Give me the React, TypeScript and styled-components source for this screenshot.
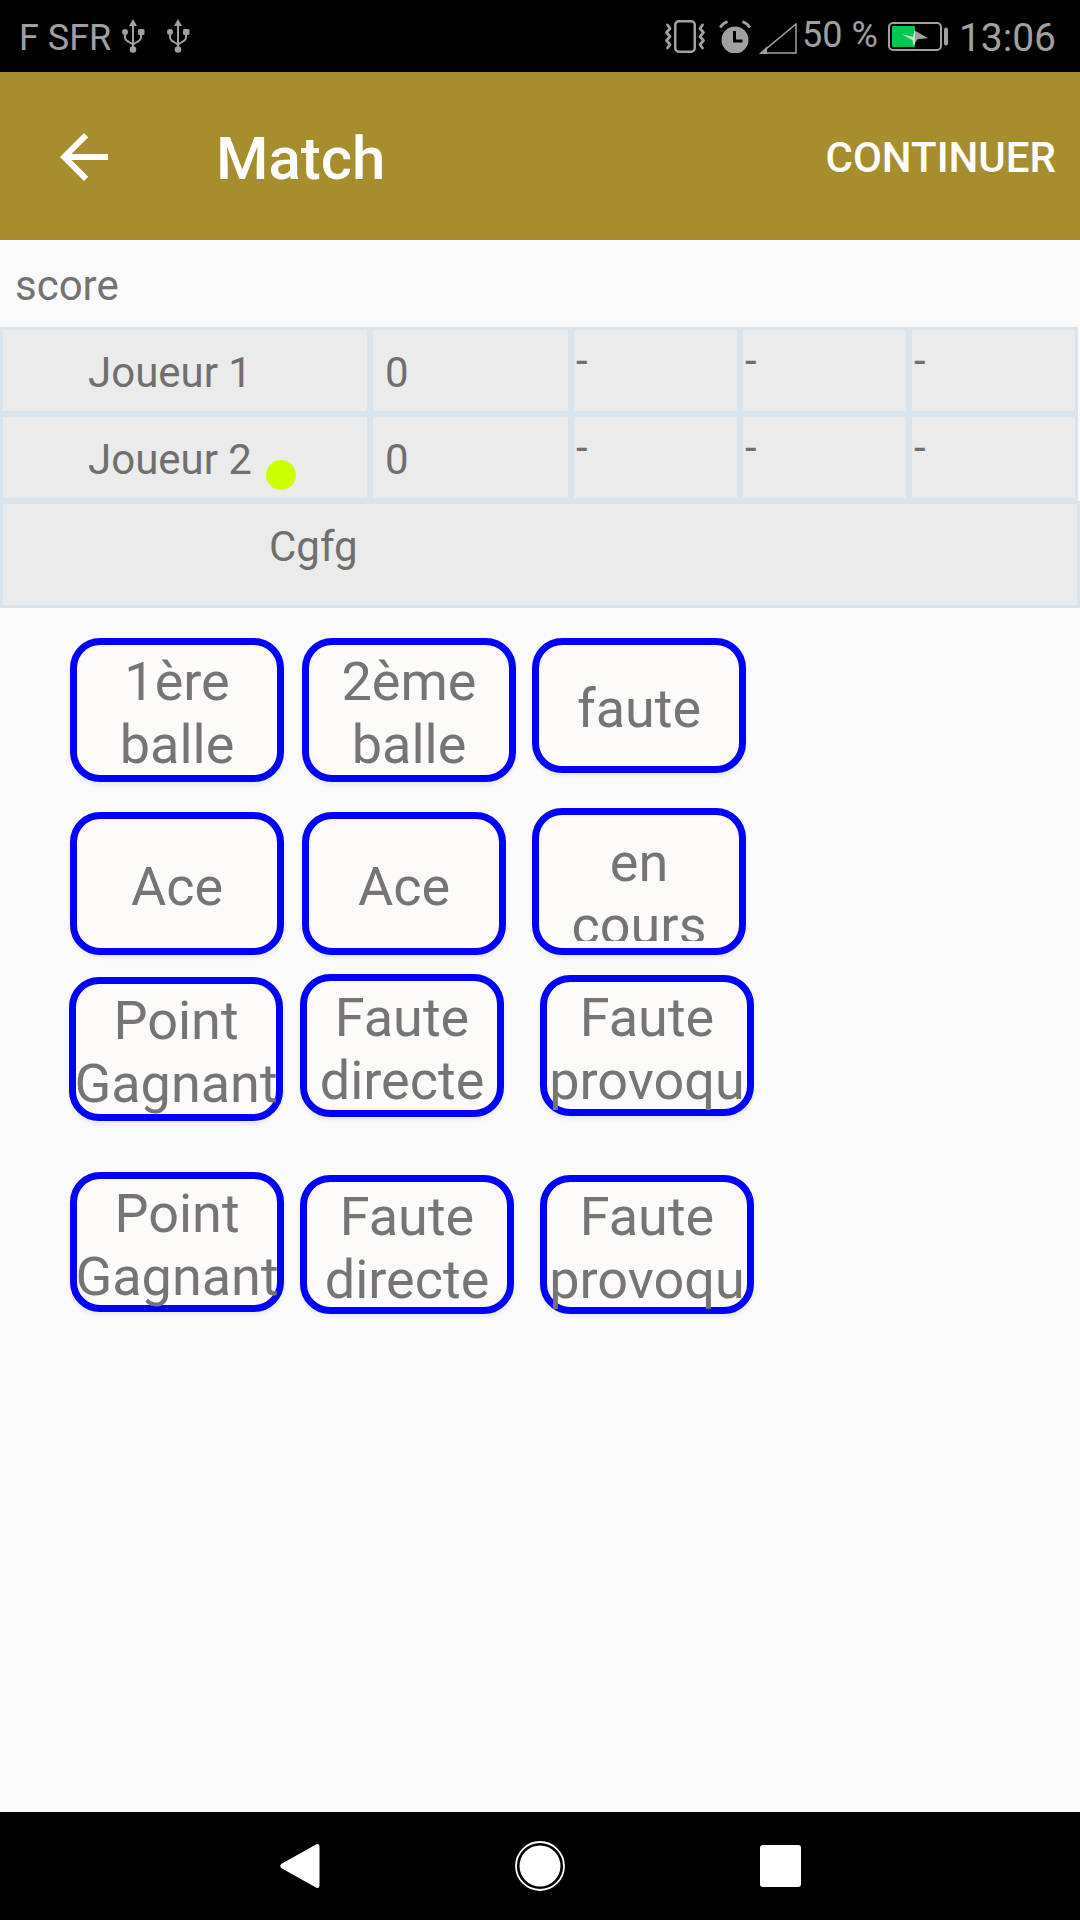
import React from "react";
import styled, { createGlobalStyle } from "styled-components";

const Global = createGlobalStyle`
  html, body { margin: 0; padding: 0; background: #fafafa; }
  * { box-sizing: border-box; }
`;

const Screen = styled.div`
  width: 1080px;
  height: 1920px;
  display: flex;
  flex-direction: column;
  overflow: hidden;
  background: #fafafa;
  font-family: Roboto, "Liberation Sans", sans-serif;
`;

const StatusBar = styled.div`
  height: 72px;
  flex: none;
  background: #000;
  color: #a0a0a0;
  display: flex;
  align-items: center;
  padding: 0 24px 0 19px;
`;

const StatusText = styled.span<{ $size: number; $ml?: number; $mt?: number }>`
  font-size: ${(p) => p.$size}px;
  line-height: 1;
  margin-left: ${(p) => p.$ml ?? 0}px;
  margin-top: ${(p) => p.$mt ?? 0}px;
  white-space: nowrap;
`;

const StatusIcon = styled.svg<{ $ml?: number; $mt?: number }>`
  display: block;
  flex: none;
  margin-left: ${(p) => p.$ml ?? 0}px;
  margin-top: ${(p) => p.$mt ?? 0}px;
`;

const Spacer = styled.div`
  flex: 1;
`;

const AppBar = styled.div`
  height: 168px;
  flex: none;
  background: #a68d2d;
  color: #fff;
  display: flex;
  align-items: center;
  padding: 0 24px 0 48px;
`;

const BackIcon = styled.svg`
  display: block;
  flex: none;
  margin-top: 2px;
`;

const Title = styled.div`
  font-size: 60px;
  font-weight: 500;
  margin: 5px 0 0 96px;
  line-height: 70px;
`;

const Action = styled.div`
  font-size: 42px;
  font-weight: 500;
  line-height: 49px;
  margin-top: 3px;
`;

const Content = styled.div`
  flex: 1;
  display: flex;
  flex-direction: column;
`;

const ScoreLabel = styled.div`
  height: 87px;
  flex: none;
  padding: 21px 0 0 15px;
  font-size: 42px;
  line-height: 49px;
  color: #737373;
`;

const TableRow = styled.div`
  display: flex;
  height: 87px;
  flex: none;
`;

const Cell = styled.div<{ $w: number; $pl?: number; $pt?: number }>`
  position: relative;
  width: ${(p) => p.$w}px;
  flex: none;
  border: 3px solid #dae4ed;
  background: #ebebeb;
  color: #6f6f6f;
  font-size: 42px;
  line-height: 49px;
  padding-top: ${(p) => p.$pt ?? 18}px;
  padding-left: ${(p) => p.$pl ?? 0}px;
  white-space: nowrap;
`;

const CommentCell = styled(Cell)`
  height: 107px;
`;

const Dot = styled.span`
  position: absolute;
  left: 263px;
  top: 43px;
  width: 30px;
  height: 30px;
  border-radius: 50%;
  background: #ccff00;
`;

const ButtonArea = styled.div`
  display: flex;
  flex-direction: column;
`;

const ButtonRow = styled.div<{ $mt: number }>`
  display: flex;
  align-items: flex-start;
  margin-top: ${(p) => p.$mt}px;
`;

const ChoiceButton = styled.div<{
  $w: number;
  $h: number;
  $ml: number;
  $mt?: number;
  $pt?: number;
}>`
  width: ${(p) => p.$w}px;
  height: ${(p) => p.$h}px;
  flex: none;
  margin-left: ${(p) => p.$ml}px;
  margin-top: ${(p) => p.$mt ?? 0}px;
  padding-top: ${(p) => p.$pt ?? 6}px;
  border: 7px solid #0000ff;
  border-radius: 30px;
  background: #fffafa;
  box-shadow: 0 3px 4px rgba(0, 0, 0, 0.07);
  display: flex;
  flex-direction: column;
  align-items: center;
  justify-content: center;
  color: #757575;
  font-size: 54px;
  line-height: 63px;
  text-align: center;
`;

const Line = styled.span`
  display: block;
  white-space: nowrap;
  flex: none;
`;

const ClippedLabel = styled.div<{ $h: number }>`
  height: ${(p) => p.$h}px;
  overflow: hidden;
`;

const NavBar = styled.div`
  height: 108px;
  flex: none;
  background: #000;
  display: flex;
  align-items: center;
  gap: 195px;
  padding-left: 280px;
`;

const NavIcon = styled.svg`
  display: block;
  flex: none;
`;

const G = "#a0a0a0";

const Usb = ({ ml }: { ml?: number }) => (
  <StatusIcon $ml={ml} $mt={0} width="23" height="34" viewBox="0 0 23 34" fill="none">
    <path d="M11 0 15 7H7z" fill={G} />
    <path d="M11 6v24" stroke={G} strokeWidth="2" />
    <circle cx="11" cy="30.500" r="3.300" fill={G} />
    <circle cx="3" cy="13" r="3" fill={G} />
    <rect x="16" y="10" width="6.500" height="6" rx="1.500" fill={G} />
    <path d="M3 14v4c0 3 2 4 4 5l4 2.500 4-2.500c2-1 4-2 4-5v-4" stroke={G} strokeWidth="2" />
  </StatusIcon>
);

const Vibrate = () => (
  <StatusIcon width="42" height="33" viewBox="0 0 42 33" fill="none">
    <rect x="11.250" y="1.250" width="19.500" height="30.500" rx="3.500" stroke={G} strokeWidth="2.500" />
    <path d="M3.500 5 6 8.500 2.500 12.500 6 16.500 2.500 20.500 6 24.500 3.500 28" stroke={G} strokeWidth="2.800" strokeLinecap="round" strokeLinejoin="round" />
    <path d="M38.500 5 36 8.500 39.500 12.500 36 16.500 39.500 20.500 36 24.500 38.500 28" stroke={G} strokeWidth="2.800" strokeLinecap="round" strokeLinejoin="round" />
  </StatusIcon>
);

const Alarm = () => (
  <StatusIcon $ml={13} width="32" height="33" viewBox="0 0 32 33" fill="none">
    <circle cx="16" cy="20" r="13.500" fill={G} />
    <path d="M1.200 7.500C3 4.500 5 3 8.500 1.500M30.800 7.500C29 4.500 27 3 23.500 1.500" stroke={G} strokeWidth="2.800" />
    <path d="M15.500 11v10h8" stroke="#000" strokeWidth="3" />
  </StatusIcon>
);

const Signal = () => (
  <StatusIcon $ml={8} $mt={5} width="38" height="31" viewBox="0 0 38 31" fill="none">
    <path d="M37 1v29H2z" stroke={G} strokeWidth="1.500" />
    <path d="M0 31 8 23.500V31z" fill={G} />
  </StatusIcon>
);

const Battery = () => (
  <StatusIcon $ml={10} width="60" height="29" viewBox="0 0 60 29" fill="none">
    <clipPath id="battery-charge">
      <rect x="0" y="0" width="27" height="29" />
    </clipPath>
    <rect x="1" y="1" width="52" height="27" rx="4" stroke={G} strokeWidth="2" />
    <rect x="56" y="5.500" width="4" height="18" rx="2" fill={G} />
    <rect x="4" y="4" width="23" height="21" rx="1" fill="#00c853" />
    <path d="M14 12.300 25 15 26.500 8.300 40 16.300 29.500 17.300 25.500 23.500 24.500 18z" fill={G} />
    <path d="M14 12.300 25 15 26.500 8.300 40 16.300 29.500 17.300 25.500 23.500 24.500 18z" fill="#c5e8cf" clipPath="url(#battery-charge)" />
  </StatusIcon>
);

export default function App() {
  return (
    <Screen>
      <Global />
      <StatusBar>
        <StatusText $size={36} $mt={4}>F SFR</StatusText>
        <Usb ml={11} />
        <Usb ml={22} />
        <Spacer />
        <Vibrate />
        <Alarm />
        <Signal />
        <StatusText $size={36} $ml={5} $mt={-3}>50 %</StatusText>
        <Battery />
        <StatusText $size={39} $ml={11} $mt={4}>13:06</StatusText>
      </StatusBar>

      <AppBar>
        <BackIcon width="72" height="72" viewBox="0 0 24 24" fill="#fff">
          <path d="M20 11H7.830l5.590-5.590L12 4l-8 8 8 8 1.410-1.410L7.830 13H20v-2z" />
        </BackIcon>
        <Title>Match</Title>
        <Spacer />
        <Action>CONTINUER</Action>
      </AppBar>

      <Content>
        <ScoreLabel>score</ScoreLabel>
        <TableRow>
          <Cell $w={370} $pl={85}>Joueur 1</Cell>
          <Cell $w={201} $pl={12}>0</Cell>
          <Cell $w={169} $pl={2} $pt={6}>-</Cell>
          <Cell $w={169} $pl={2} $pt={6}>-</Cell>
          <Cell $w={169} $pl={2} $pt={6}>-</Cell>
        </TableRow>
        <TableRow>
          <Cell $w={370} $pl={85}>
            Joueur 2
            <Dot />
          </Cell>
          <Cell $w={201} $pl={12}>0</Cell>
          <Cell $w={169} $pl={2} $pt={6}>-</Cell>
          <Cell $w={169} $pl={2} $pt={6}>-</Cell>
          <Cell $w={169} $pl={2} $pt={6}>-</Cell>
        </TableRow>
        <CommentCell $w={1080} $pl={266}>Cgfg</CommentCell>

        <ButtonArea>
          <ButtonRow $mt={30}>
            <ChoiceButton $w={214} $h={144} $ml={70}>
              <Line>1ère</Line>
              <Line>balle</Line>
            </ChoiceButton>
            <ChoiceButton $w={214} $h={144} $ml={18}>
              <Line>2ème</Line>
              <Line>balle</Line>
            </ChoiceButton>
            <ChoiceButton $w={214} $h={135} $ml={16}>
              <Line>faute</Line>
            </ChoiceButton>
          </ButtonRow>
          <ButtonRow $mt={26}>
            <ChoiceButton $w={214} $h={143} $ml={70} $mt={4}>
              <Line>Ace</Line>
            </ChoiceButton>
            <ChoiceButton $w={204} $h={143} $ml={18} $mt={4}>
              <Line>Ace</Line>
            </ChoiceButton>
            <ChoiceButton $w={214} $h={147} $ml={26} $pt={9}>
              <ClippedLabel $h={110}>
                <Line>en</Line>
                <Line>cours</Line>
              </ClippedLabel>
            </ChoiceButton>
          </ButtonRow>
          <ButtonRow $mt={19}>
            <ChoiceButton $w={214} $h={144} $ml={69} $mt={3}>
              <Line>Point</Line>
              <Line>Gagnant</Line>
            </ChoiceButton>
            <ChoiceButton $w={204} $h={143} $ml={17}>
              <Line>Faute</Line>
              <Line>directe</Line>
            </ChoiceButton>
            <ChoiceButton $w={214} $h={141} $ml={36} $mt={1}>
              <Line>Faute</Line>
              <Line>provoqu</Line>
            </ChoiceButton>
          </ButtonRow>
          <ButtonRow $mt={51}>
            <ChoiceButton $w={214} $h={140} $ml={70}>
              <Line>Point</Line>
              <Line>Gagnant</Line>
            </ChoiceButton>
            <ChoiceButton $w={214} $h={139} $ml={16} $mt={3}>
              <Line>Faute</Line>
              <Line>directe</Line>
            </ChoiceButton>
            <ChoiceButton $w={214} $h={139} $ml={26} $mt={3}>
              <Line>Faute</Line>
              <Line>provoqu</Line>
            </ChoiceButton>
          </ButtonRow>
        </ButtonArea>
      </Content>

      <NavBar>
        <NavIcon width="40" height="46" viewBox="0 0 40 46">
          <path d="M36 1.500c2-1.200 3.500-.2 3.500 2v39c0 2.200-1.500 3.200-3.500 2L2 25.500c-2.300-1.400-2.300-3.600 0-5z" fill="#fff" />
        </NavIcon>
        <NavIcon width="50" height="50" viewBox="0 0 50 50">
          <circle cx="25" cy="25" r="24" fill="none" stroke="#fff" strokeWidth="1.800" />
          <circle cx="25" cy="25" r="20.500" fill="#fff" />
        </NavIcon>
        <NavIcon width="41" height="42" viewBox="0 0 41 42">
          <rect width="41" height="42" rx="3" fill="#fff" />
        </NavIcon>
      </NavBar>
    </Screen>
  );
}
